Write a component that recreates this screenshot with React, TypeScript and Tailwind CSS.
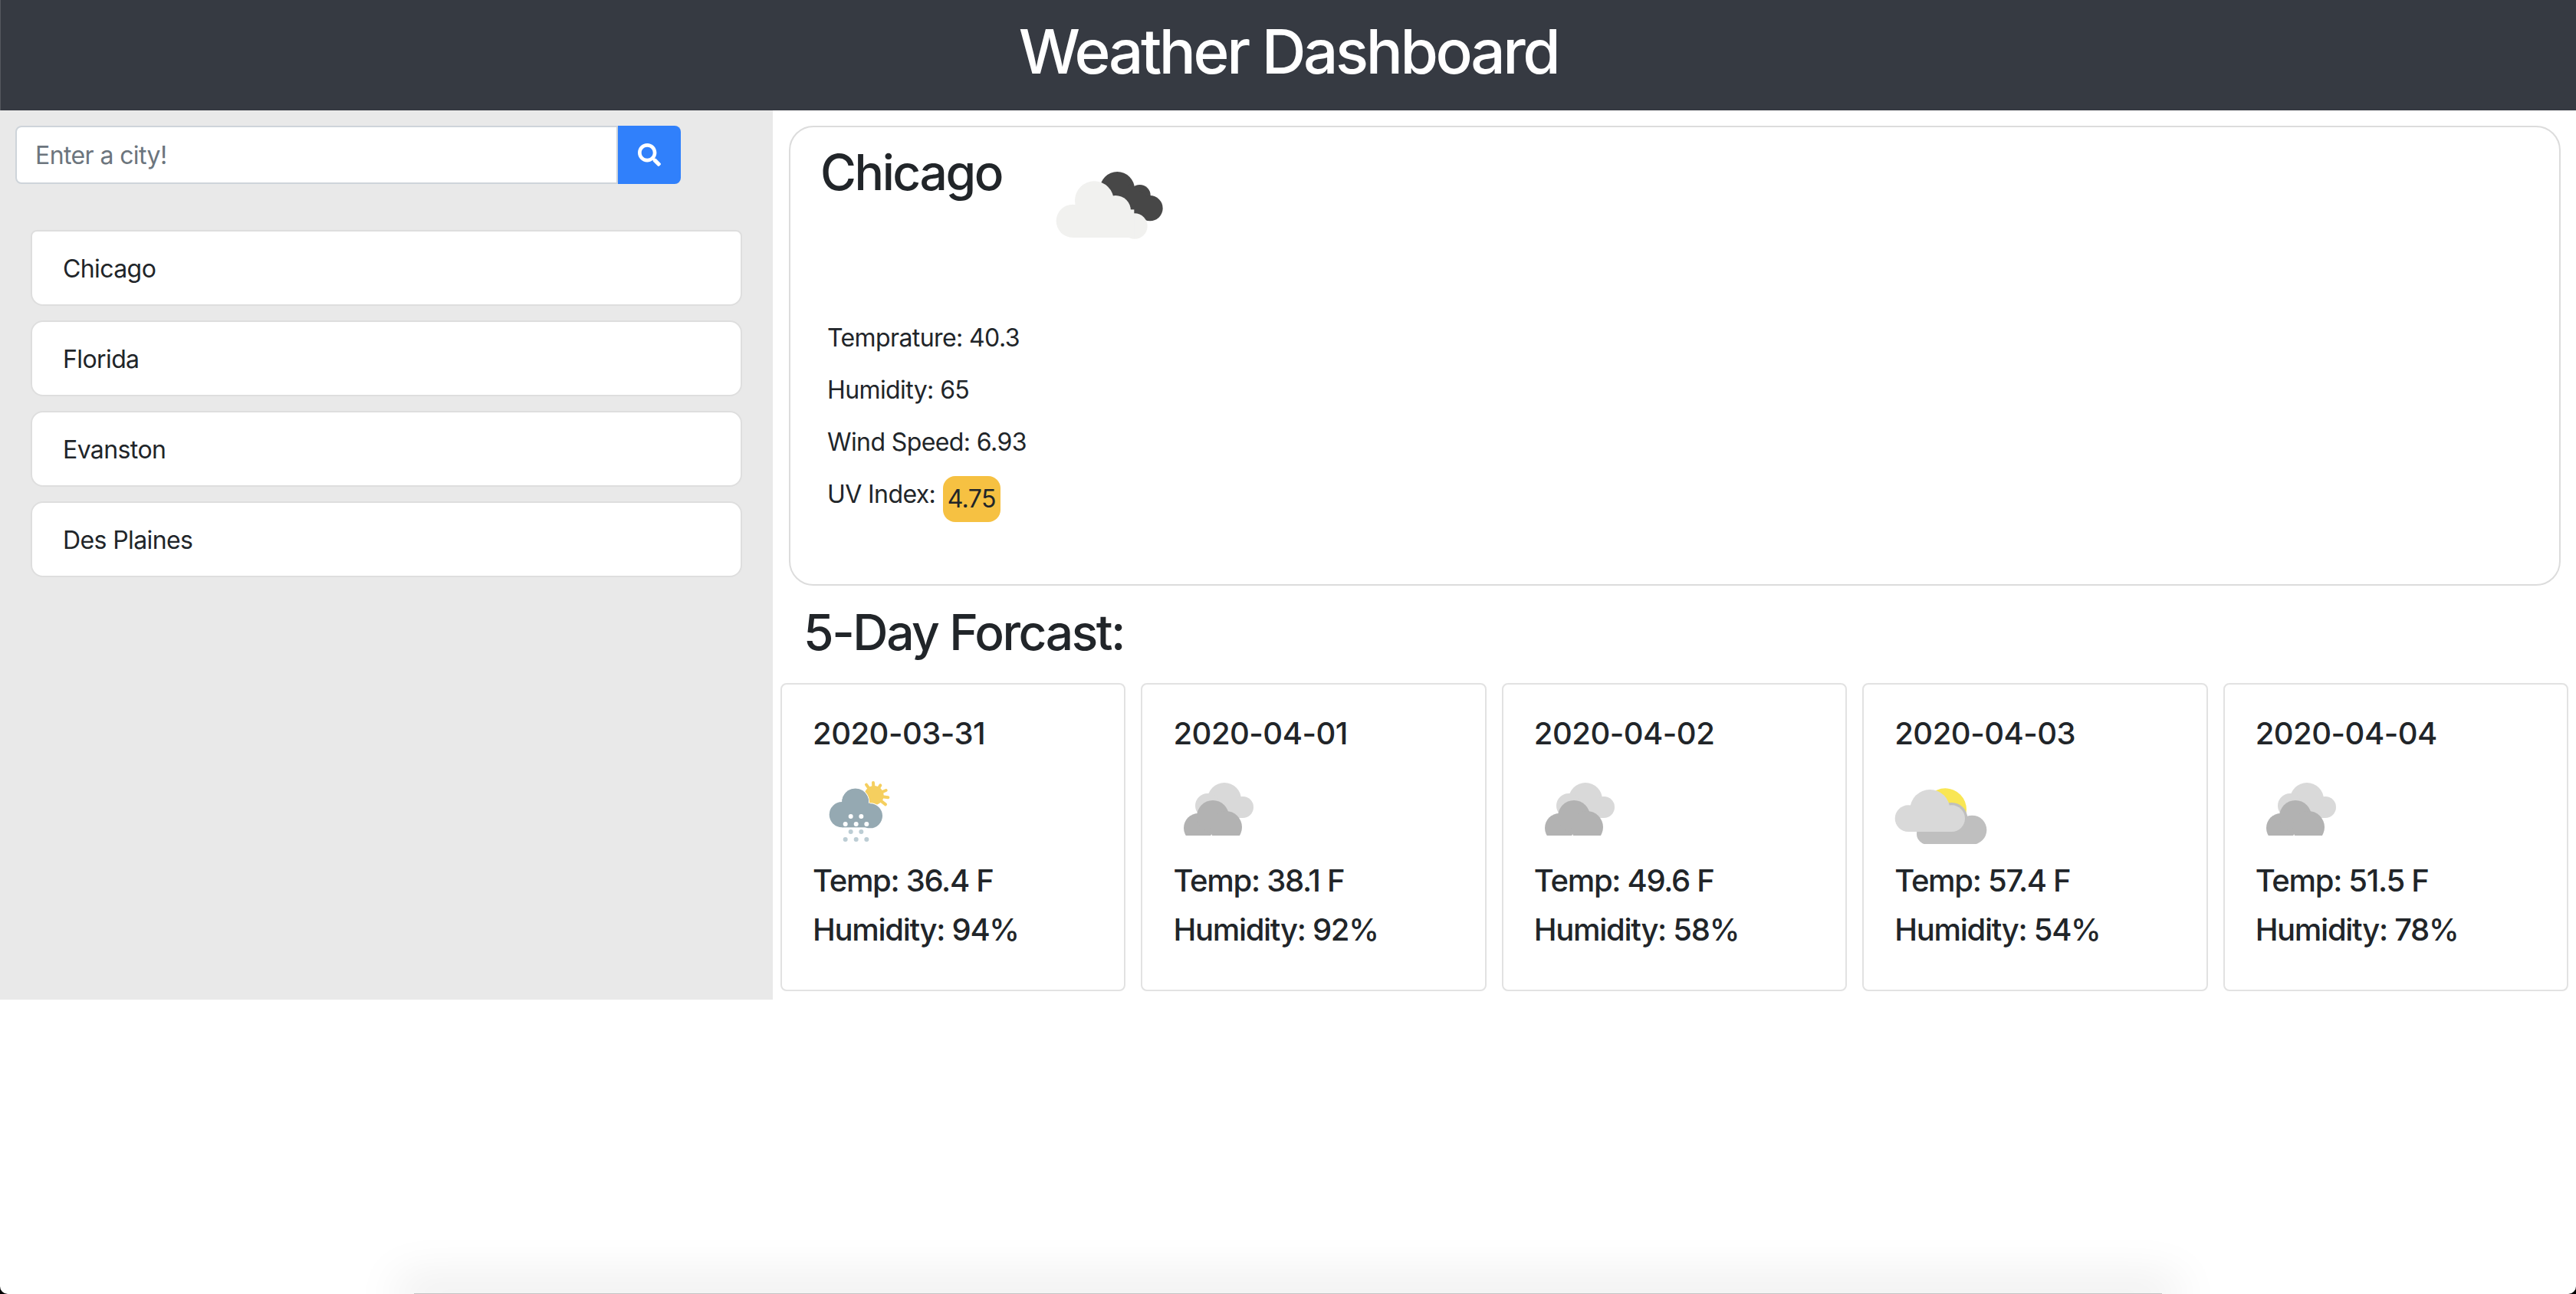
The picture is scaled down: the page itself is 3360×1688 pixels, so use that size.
import { FaSearch } from "react-icons/fa";

const cities = ["Chicago", "Florida", "Evanston", "Des Plaines"];

const stats = ["Temprature: 40.3", "Humidity: 65", "Wind Speed: 6.93"];

type Day = { date: string; temp: string; humidity: string; icon: "snow" | "clouds" | "sun" };

const days: Day[] = [
  { date: "2020-03-31", temp: "36.4", humidity: "94", icon: "snow" },
  { date: "2020-04-01", temp: "38.1", humidity: "92", icon: "clouds" },
  { date: "2020-04-02", temp: "49.6", humidity: "58", icon: "clouds" },
  { date: "2020-04-03", temp: "57.4", humidity: "54", icon: "sun" },
  { date: "2020-04-04", temp: "51.5", humidity: "78", icon: "clouds" },
];

function MainIcon() {
  return (
    <svg width="200" height="130" viewBox="0 0 600 390" className="shrink-0">
      <g fill="#474747">
        <circle cx="352" cy="140" r="68" />
        <circle cx="440" cy="165" r="42" />
        <circle cx="480" cy="215" r="50" />
        <polygon points="340,170 400,120 470,170 470,262 400,240" />
      </g>
      <g fill="#f1f1ef">
        <circle cx="178" cy="265" r="65" />
        <circle cx="262" cy="185" r="76" />
        <circle cx="345" cy="225" r="60" />
        <circle cx="420" cy="285" r="50" />
        <rect x="178" y="220" width="240" height="110" />
      </g>
    </svg>
  );
}

function SnowIcon() {
  return (
    <g>
      <g stroke="#f5cf5f" strokeWidth="12" strokeLinecap="round">
        <line x1="240" y1="170" x2="210" y2="128" />
        <line x1="240" y1="170" x2="237" y2="120" />
        <line x1="240" y1="170" x2="265" y2="130" />
        <line x1="240" y1="170" x2="287" y2="150" />
        <line x1="240" y1="170" x2="295" y2="178" />
        <line x1="240" y1="170" x2="285" y2="205" />
      </g>
      <circle cx="240" cy="170" r="38" fill="#f5cf5f" />
      <g fill="#95a9b2" stroke="#ffffff" strokeWidth="6" paintOrder="stroke">
        <circle cx="167" cy="195" r="52" />
        <circle cx="225" cy="250" r="48" />
      </g>
      <g fill="#95a9b2">
        <circle cx="115" cy="245" r="50" />
        <circle cx="167" cy="195" r="52" />
        <circle cx="225" cy="250" r="46" />
        <rect x="115" y="200" width="110" height="95" />
      </g>
      <g fill="#ffffff">
        <circle cx="149" cy="252" r="9" />
        <circle cx="190" cy="252" r="9" />
        <circle cx="128" cy="282" r="9" />
        <circle cx="170" cy="282" r="9" />
        <circle cx="211" cy="282" r="9" />
      </g>
      <g fill="#bccdd4">
        <circle cx="149" cy="312" r="9" />
        <circle cx="190" cy="312" r="9" />
        <circle cx="128" cy="342" r="9" />
        <circle cx="170" cy="342" r="9" />
        <circle cx="211" cy="342" r="9" />
      </g>
    </g>
  );
}

function CloudsIcon() {
  return (
    <g transform="scale(3) translate(14 40)">
      <clipPath id="cloud-clip">
        <rect x="-5" y="-5" width="110" height="74" />
      </clipPath>
      <g fill="#d9d9d9">
        <circle cx="53" cy="22" r="22" />
        <circle cx="31" cy="30" r="16" />
        <circle cx="77" cy="32" r="14" />
        <rect x="31" y="22" width="46" height="24" />
      </g>
      <g fill="#b2b2b2" clipPath="url(#cloud-clip)">
        <circle cx="19" cy="59" r="19" />
        <circle cx="38" cy="44" r="21" />
        <circle cx="55" cy="58" r="21" />
      </g>
    </g>
  );
}

function SunIcon() {
  return (
    <g transform="translate(-66 90)">
      <circle cx="265" cy="135" r="83" fill="#f9e654" />
      <g fill="#bfbfbf">
        <circle cx="370" cy="215" r="57" />
        <circle cx="195" cy="230" r="42" />
        <circle cx="290" cy="170" r="62" />
        <rect x="195" y="170" width="175" height="102" />
      </g>
      <g fill="#d9d9d9">
        <circle cx="120" cy="170" r="52" />
        <circle cx="205" cy="135" r="78" />
        <circle cx="290" cy="170" r="52" />
        <rect x="120" y="135" width="170" height="87" />
      </g>
    </g>
  );
}

function ForecastCard({ day }: { day: Day }) {
  return (
    <div className="min-w-0 flex-1 rounded-lg border-2 border-[#e2e2e2] bg-white px-[40px] pt-[40px] pb-[46px]">
      <h5 className="text-[40px] leading-[48px] font-medium tracking-[-0.5px] text-[#212529]">{day.date}</h5>
      <svg width="160" height="120" viewBox="0 0 480 360">
        {day.icon === "snow" && <SnowIcon />}
        {day.icon === "clouds" && <CloudsIcon />}
        {day.icon === "sun" && <SunIcon />}
      </svg>
      <p className="mt-[16px] text-[40px] leading-[64px] font-medium tracking-[-1.3px] text-[#212529]">Temp: {day.temp} F</p>
      <p className="text-[40px] leading-[64px] font-medium tracking-[-1.3px] text-[#212529]">Humidity: {day.humidity}%</p>
    </div>
  );
}

export default function App() {
  return (
    <div className="relative min-h-screen overflow-hidden bg-white text-[32px] leading-[48px] tracking-[-0.6px] text-[#212529] font-['Inter','Liberation_Sans',sans-serif]">
      <header className="flex h-[144px] items-center justify-center border-l border-[#55585f] bg-[#363a42] pb-[10px]">
        <h1 className="text-[80px] leading-[96px] font-medium tracking-[-3.4px] text-white">Weather Dashboard</h1>
      </header>

      <div className="flex">
        <aside className="h-[1160px] w-[1008px] shrink-0 bg-[#e9e9e9] px-[20px] pt-[20px]">
          <div className="flex h-[76px] w-[868px]">
            <input
              placeholder="Enter a city!"
              className="h-full min-w-0 flex-1 rounded-l-lg border-2 border-[#ced4da] bg-white px-[24px] text-[32px] tracking-[-0.6px] text-[#495057] outline-none placeholder:text-[#6c757d]"
            />
            <button className="flex h-full w-[82px] items-center justify-center rounded-r-lg bg-[#3080fb] text-white">
              <FaSearch size={30} />
            </button>
          </div>
          <ul className="mt-[60px] flex flex-col gap-[19px] pr-[20px] pl-[20px]">
            {cities.map((city) => (
              <li
                key={city}
                className="flex h-[99px] items-center rounded-2xl border-2 border-[#dedede] bg-white px-[40px] pt-[3px] text-[32px] first:rounded-t-lg"
              >
                {city}
              </li>
            ))}
          </ul>
        </aside>

        <main className="min-w-0 flex-1 pt-[20px] pr-[10px] pl-[10px]">
          <section className="mr-[10px] ml-[11px] h-[600px] rounded-[32px] border-2 border-[#dcdcdc] bg-white pt-[20px] pl-[39px]">
            <div className="flex">
              <h2 className="text-[64px] leading-[77px] font-medium tracking-[-2.4px]">Chicago</h2>
              <div className="mt-[14px] ml-[33px]">
                <MainIcon />
              </div>
            </div>
            <div className="mt-[87px] pl-[9px]">
              {stats.map((s) => (
                <p key={s} className="mb-[20px]">{s}</p>
              ))}
              <p>
                UV Index:{" "}
                <span className="ml-[1px] inline-block rounded-2xl bg-[#f6c142] px-[6px] pt-[6px] pb-[6px] align-top text-[32px]">4.75</span>
              </p>
            </div>
          </section>

          <h2 className="mt-[22px] ml-[30px] text-[64px] leading-[77px] font-medium tracking-[-2.4px]">5-Day Forcast:</h2>

          <div className="mt-[28px] flex gap-[20px]">
            {days.map((d) => (
              <ForecastCard key={d.date} day={d} />
            ))}
          </div>
        </main>
      </div>

      <div className="absolute right-[540px] bottom-0 left-[540px] h-[1px] bg-[#c4c4c4] shadow-[0_0_60px_22px_rgba(0,0,0,0.08)]" />
      <div className="pointer-events-none absolute inset-0 rounded-b-[10px] shadow-[0_0_0_20px_#000]" />
    </div>
  );
}
